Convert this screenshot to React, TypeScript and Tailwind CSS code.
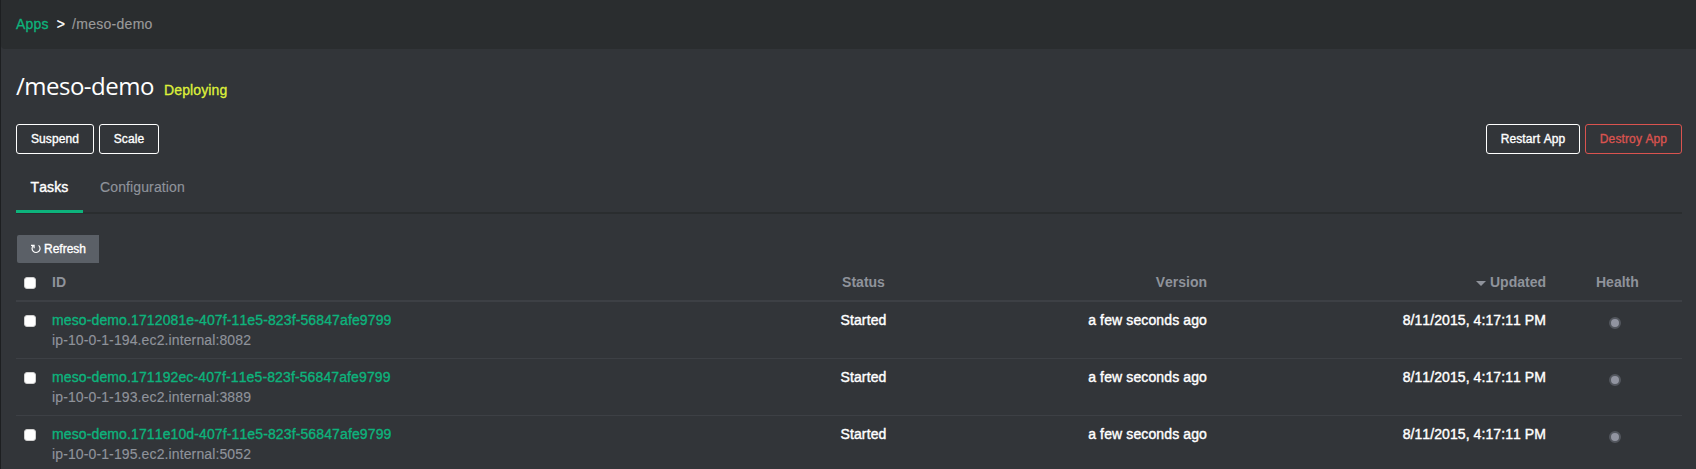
import type { ReactNode } from "react";

interface Task {
  id: string;
  host: string;
}

const tasks: Task[] = [
  { id: "meso-demo.1712081e-407f-11e5-823f-56847afe9799", host: "ip-10-0-1-194.ec2.internal:8082" },
  { id: "meso-demo.171192ec-407f-11e5-823f-56847afe9799", host: "ip-10-0-1-193.ec2.internal:3889" },
  { id: "meso-demo.1711e10d-407f-11e5-823f-56847afe9799", host: "ip-10-0-1-195.ec2.internal:5052" },
];

const columns = "grid grid-cols-[36px_730px_163px_262px_339px_136px]";

function Button({ children, className }: { children: ReactNode; className: string }) {
  return (
    <button
      className={`h-[30px] rounded-[3px] border text-center text-xs leading-none tracking-[0.12px] [-webkit-text-stroke:0.35px_currentColor] ${className}`}
    >
      {children}
    </button>
  );
}

function Checkbox() {
  return (
    <input
      type="checkbox"
      className="mt-[5px] ml-2 block size-3 appearance-none rounded-[3px] border border-[#d0d0d0] bg-white"
    />
  );
}

function TaskRow({ task }: { task: Task }) {
  return (
    <div className={`${columns} border-b border-[#3d4045] py-2 text-white`}>
      <Checkbox />
      <div>
        <a className="block text-[#0db37c] [-webkit-text-stroke:0.35px_currentColor]">{task.id}</a>
        <span className="block text-[#8f939b] [-webkit-text-stroke:0.15px_currentColor]">{task.host}</span>
      </div>
      <div className="text-center [-webkit-text-stroke:0.4px_currentColor]">Started</div>
      <div className="text-right [-webkit-text-stroke:0.4px_currentColor]">a few seconds ago</div>
      <div className="text-right tracking-[0.08px] [-webkit-text-stroke:0.4px_currentColor]">8/11/2015, 4:17:11 PM</div>
      <div className="pt-[7px] pl-[63px]">
        <div className="size-3 rounded-full border-2 border-[#53575e] bg-[#9194a0]" />
      </div>
    </div>
  );
}

export default function App() {
  return (
    <div className="h-[469px] overflow-hidden border-l border-[#1d1f21] bg-[#323539] font-['Liberation_Sans',Arial,sans-serif] text-sm leading-5 tracking-[0.12px] [font-kerning:none]">
      <nav className="flex h-[49px] rounded-bl-[4px] bg-[#2a2d2f] pt-[14px] pl-[15px] tracking-[0.2px]">
        <a className="text-[#0db37c] [-webkit-text-stroke:0.3px_currentColor]">Apps</a>
        <span className="ml-2 text-white [-webkit-text-stroke:0.3px_currentColor]">&gt;</span>
        <span className="ml-[7px] tracking-[0.27px] text-[#9a9a9a] [-webkit-text-stroke:0.15px_currentColor]">/meso-demo</span>
      </nav>
      <main className="pr-[14px] pl-[15px]">
        <header className="flex h-[75px] items-baseline pt-[20px]">
          <h1 className="w-[148px] font-['Open_Sans',sans-serif] text-2xl leading-[34px] tracking-[-0.5px] whitespace-nowrap text-white">
            /meso-demo
          </h1>
          <span className="text-[#dff13a] [-webkit-text-stroke:0.3px_currentColor]">Deploying</span>
        </header>
        <div className="flex gap-[5px]">
          <Button className="w-[78px] border-white text-white">Suspend</Button>
          <Button className="w-[60px] border-white text-white">Scale</Button>
          <Button className="ml-auto w-[94px] border-white text-white">Restart App</Button>
          <Button className="w-[97px] border-[#d9534f] text-[#d9534f]">Destroy App</Button>
        </div>
        <div className="mt-[23px] flex h-[37px] border-b-2 border-[#2a2d2f]">
          <div className="h-9 w-[67px] border-b-3 border-[#0db37c] text-center text-white [-webkit-text-stroke:0.4px_currentColor]">
            Tasks
          </div>
          <div className="ml-[17px] text-[#8f939b] [-webkit-text-stroke:0.15px_currentColor]">Configuration</div>
        </div>
        <button className="mt-[21px] ml-px flex h-7 w-[82px] items-center rounded-l-[2px] bg-[#5b6067] pl-[14px] text-xs tracking-normal text-white [-webkit-text-stroke:0.35px_currentColor]">
          <svg viewBox="0 0 10 10" className="mr-[3px] size-[10px]" fill="none" stroke="currentColor" strokeWidth="1.2">
            <path d="M7.6 1.4A4 4 0 1 1 2.3 1.6M0 1.3H3.1V4.2" />
          </svg>
          Refresh
        </button>
        <div className={`${columns} mt-px border-b-2 border-[#3d4045] py-2 font-bold tracking-normal text-[#8f939b]`}>
          <Checkbox />
          <div>ID</div>
          <div className="text-center">Status</div>
          <div className="text-right">Version</div>
          <div className="flex items-center justify-end">
            <svg viewBox="0 0 10 5" className="mt-[3px] mr-[4px] h-[5px] w-[10px]" fill="currentColor">
              <path d="M0 0H10L5 5Z" />
            </svg>
            Updated
          </div>
          <div className="pl-[50px]">Health</div>
        </div>
        {tasks.map((task) => (
          <TaskRow key={task.id} task={task} />
        ))}
      </main>
    </div>
  );
}
